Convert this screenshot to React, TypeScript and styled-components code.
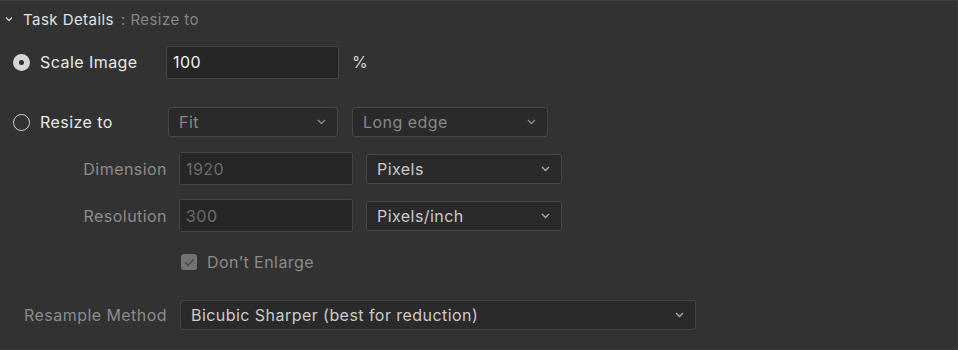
import styled, { createGlobalStyle } from 'styled-components'

const GlobalStyle = createGlobalStyle`
  html, body {
    margin: 0;
    padding: 0;
    background: #323232;
  }
  body {
    font-family: Inter, "Liberation Sans", Arial, sans-serif;
    letter-spacing: 0.45px;
    -webkit-font-smoothing: antialiased;
  }
`

const Panel = styled.div`
  box-sizing: border-box;
  width: 958px;
  height: 350px;
  background: #323232;
  border-top: 1px solid #3e3e3e;
  border-right: 1px solid #3a3a3a;
  border-bottom: 1px solid #3a3a3a;
  display: flex;
  flex-direction: column;
  overflow: hidden;
`
const Header = styled.div`
  height: 36px;
  display: flex;
  align-items: center;
  padding-left: 5px;
  gap: 10px;
  font-size: 15px;
`
const HeaderTitle = styled.span`
  color: #e2e2e2;
`
const HeaderSub = styled.span`
  color: #858585;
  margin-left: -3px;
`
const Row = styled.div<{ $top: number; $height: number }>`
  display: flex;
  align-items: center;
  margin-top: ${p => p.$top}px;
  height: ${p => p.$height}px;
`
const RadioLabel = styled.label`
  box-sizing: border-box;
  width: 166px;
  flex: none;
  display: flex;
  align-items: center;
  gap: 10px;
  padding-left: 13px;
  font-size: 16px;
  color: #e8e8e8;
`
const RadioDot = styled.span<{ $checked?: boolean }>`
  box-sizing: border-box;
  width: 17px;
  height: 17px;
  border-radius: 50%;
  display: flex;
  align-items: center;
  justify-content: center;
  background: ${p => (p.$checked ? '#d6d6d6' : 'transparent')};
  border: ${p => (p.$checked ? 'none' : '1.5px solid #d2d2d2')};
  &::after {
    content: '';
    display: ${p => (p.$checked ? 'block' : 'none')};
    width: 5px;
    height: 5px;
    border-radius: 50%;
    background: #2c2c2c;
  }
`
const FieldLabel = styled.span`
  box-sizing: border-box;
  width: 168px;
  flex: none;
  padding-right: 1px;
  text-align: right;
  font-size: 16px;
  color: #8c8c8c;
  white-space: nowrap;
  overflow: hidden;
`
const TextBox = styled.div<{ $width: number; $disabled?: boolean; $ml?: number }>`
  box-sizing: border-box;
  width: ${p => p.$width}px;
  height: 33px;
  margin-left: ${p => p.$ml ?? 0}px;
  display: flex;
  align-items: center;
  padding-left: 6px;
  background: #262626;
  border: 1px solid #454545;
  border-radius: 2px;
  font-size: 16px;
  color: ${p => (p.$disabled ? '#6c6c6c' : '#f2f2f2')};
`
const Select = styled.div<{ $width: number; $disabled?: boolean; $ml?: number }>`
  box-sizing: border-box;
  width: ${p => p.$width}px;
  height: 30px;
  margin-left: ${p => p.$ml ?? 0}px;
  display: flex;
  align-items: center;
  justify-content: space-between;
  padding: 0 11px 0 10px;
  background: #2a2a2a;
  border: 1px solid #464646;
  border-radius: 3px;
  font-size: 16px;
  color: ${p => (p.$disabled ? '#878787' : '#cbcbcb')};
  flex: none;
`
const Unit = styled.span`
  margin-left: 13px;
  font-size: 16px;
  color: #d8d8d8;
`
const CheckRow = styled.label`
  display: flex;
  align-items: center;
  gap: 10px;
  margin-left: 181px;
  font-size: 16px;
  color: #8a8a8a;
`
const CheckBox = styled.span`
  width: 16px;
  height: 16px;
  border-radius: 3px;
  background: #737373;
  display: flex;
  align-items: center;
  justify-content: center;
`

const Chevron = ({ color = '#a0a0a0' }: { color?: string }) => (
  <svg width="9" height="6" viewBox="0 0 9 6" fill="none">
    <path d="M1 1l3.5 3.5L8 1" stroke={color} strokeWidth="1.3" />
  </svg>
)

const Dropdown: React.FC<{ width: number; value: string; disabled?: boolean; ml?: number }> = ({
  width,
  value,
  disabled,
  ml,
}) => (
  <Select $width={width} $disabled={disabled} $ml={ml}>
    <span>{value}</span>
    <Chevron color={disabled ? '#8a8a8a' : '#b0b0b0'} />
  </Select>
)

export default function App() {
  return (
    <>
      <GlobalStyle />
      <Panel>
        <Header>
          <svg width="8" height="6" viewBox="0 0 8 6" fill="none">
            <path d="M1 1.5l3 3 3-3" stroke="#d0d0d0" strokeWidth="1.3" />
          </svg>
          <HeaderTitle>Task Details</HeaderTitle>
          <HeaderSub>: Resize to</HeaderSub>
        </Header>

        <Row $top={8} $height={34}>
          <RadioLabel>
            <RadioDot $checked />
            Scale Image
          </RadioLabel>
          <TextBox $width={173}>100</TextBox>
          <Unit>%</Unit>
        </Row>

        <Row $top={28} $height={30}>
          <RadioLabel>
            <RadioDot />
            Resize to
          </RadioLabel>
          <Dropdown width={170} value="Fit" disabled ml={2} />
          <Dropdown width={196} value="Long edge" disabled ml={14} />
        </Row>

        <Row $top={15} $height={33}>
          <FieldLabel>Dimension</FieldLabel>
          <TextBox $width={174} $disabled $ml={11}>1920</TextBox>
          <Dropdown width={196} value="Pixels" ml={13} />
        </Row>

        <Row $top={14} $height={33}>
          <FieldLabel>Resolution</FieldLabel>
          <TextBox $width={174} $disabled $ml={11}>300</TextBox>
          <Dropdown width={196} value="Pixels/inch" ml={13} />
        </Row>

        <Row $top={16} $height={28}>
          <CheckRow>
            <CheckBox>
              <svg width="11" height="9" viewBox="0 0 11 9" fill="none">
                <path d="M1.2 4.6l2.8 2.8L9.8 1.4" stroke="#505050" strokeWidth="1.8" />
              </svg>
            </CheckBox>
            Don’t Enlarge
          </CheckRow>
        </Row>

        <Row $top={24} $height={30}>
          <FieldLabel>Resample Method</FieldLabel>
          <Dropdown width={516} value="Bicubic Sharper (best for reduction)" ml={12} />
        </Row>
      </Panel>
    </>
  )
}
